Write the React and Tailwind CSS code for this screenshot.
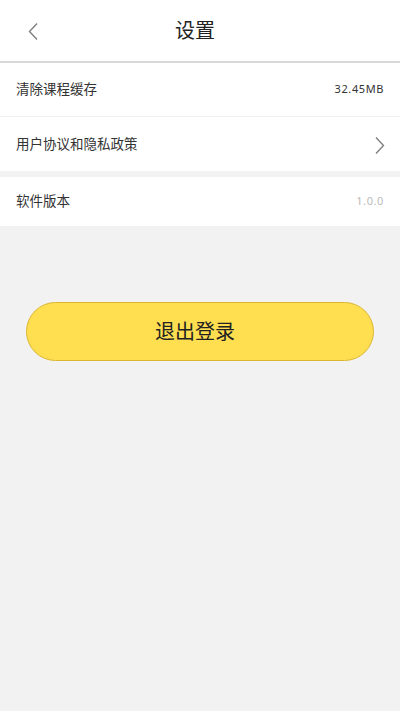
const font = { fontFamily: '"Noto Sans", "Noto Sans CJK SC", sans-serif' }

function Row({ label, children, className = '' }) {
  return (
    <div className={`flex items-center justify-between bg-white pl-4 pr-4 ${className}`}>
      <span className="text-[13.5px] text-[#333]">{label}</span>
      {children}
    </div>
  )
}

export default function App() {
  return (
    <div className="min-h-[711px] bg-[#f2f2f2]" style={font}>
      {/* 顶部 */}
      <header className="relative flex h-[63px] items-center justify-center border-b-2 border-[#d9d9d9] bg-white pr-[10px]">
        <button className="absolute left-[27px] top-[22px] text-[#808080]">
          <svg width="12" height="19" viewBox="0 0 12 19" fill="none" stroke="currentColor" strokeWidth="1.4">
            <polyline points="10,1.5 2.5,9.5 10,17.5" />
          </svg>
        </button>
        <h1 className="text-[20px] text-[#222]">设置</h1>
      </header>

      <Row label="清除课程缓存" className="h-[54px] border-b border-[#f0f0f0]">
        <span className="text-[11px] tracking-[0.6px] text-[#333]">32.45MB</span>
      </Row>
      <Row label="用户协议和隐私政策" className="h-[54px]">
        <svg width="12" height="19" viewBox="0 0 12 19" fill="none" stroke="#808080" strokeWidth="1.4" className="-mr-[2px] mt-[2px]">
          <polyline points="2,1.5 9.5,9.5 2,17.5" />
        </svg>
      </Row>

      <Row label="软件版本" className="mt-[6px] h-[49px]">
        <span className="text-[11px] tracking-[0.6px] text-[#bbb]">1.0.0</span>
      </Row>

      <div className="px-[26px] pt-[76px]">
        <button className="flex h-[59px] w-full items-center justify-center rounded-full border-[1.5px] border-[#dcb633] bg-[#ffdf50] pr-[10px] text-[20px] text-[#222]">
          退出登录
        </button>
      </div>
    </div>
  )
}
